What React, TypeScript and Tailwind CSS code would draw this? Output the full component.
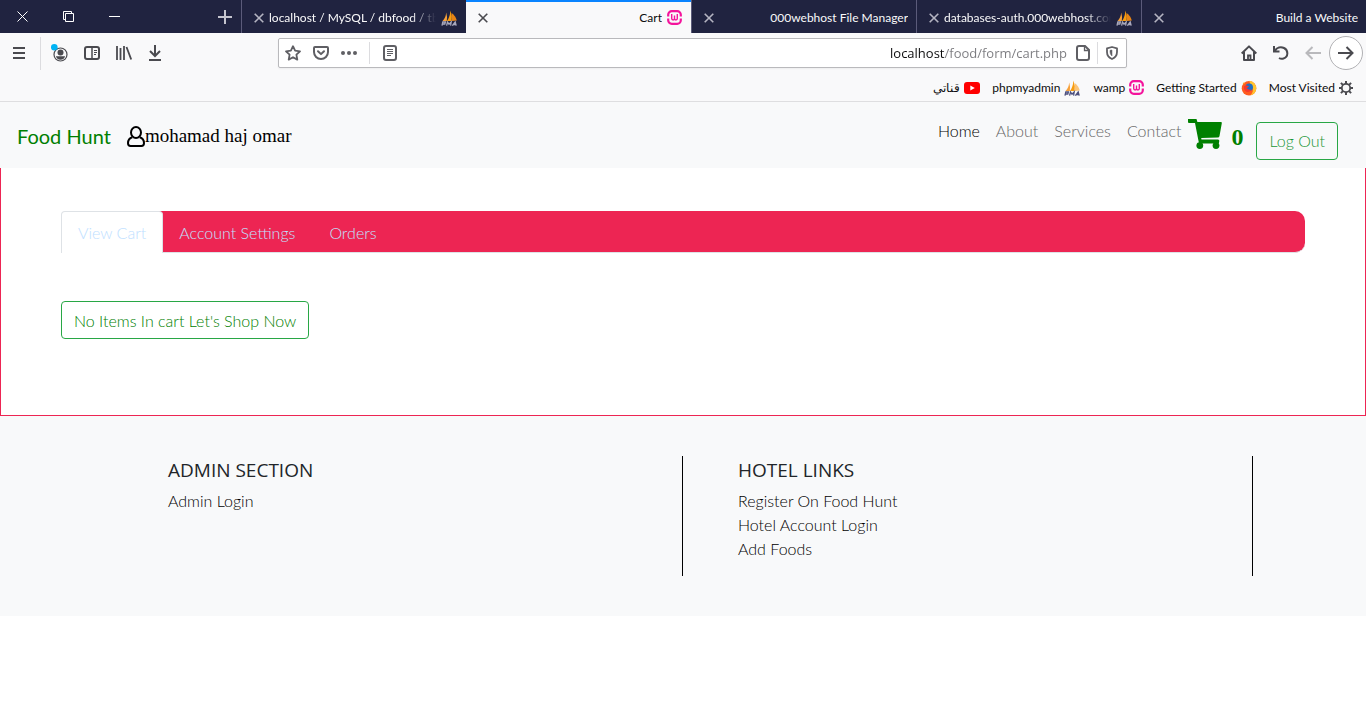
import React from "react";

function CloseGlyph() {
  return (
    <svg width="10" height="10" viewBox="0 0 10 10" stroke="currentColor" strokeWidth="1.6" fill="none">
      <path d="M0.7 0.7 9.3 9.3M9.3 0.7 0.7 9.3" />
    </svg>
  );
}

function UserIcon() {
  return (
    <svg width="18" height="21" viewBox="0 0 18 21" fill="none" stroke="currentColor" strokeWidth="2" className="shrink-0">
      <ellipse cx="9" cy="6.500" rx="5" ry="5.500" />
      <path d="M5.300 11.300Q1 12.500 1 17.300 1 20 3.600 20h10.800Q17 20 17 17.300 17 12.500 12.700 11.300" />
    </svg>
  );
}

function CartIcon() {
  return (
    <svg width="34" height="30" viewBox="0 0 34 30" fill="currentColor" className="shrink-0">
      <path d="M0 0h8.500L9.400 3H33q1 0 .8 1.200L31.500 17q-.2 1.500-1.800 1.600L13.200 19l.3 1.500H30q1.500 0 1.300 1.500l-.5 2.500H11L7 4H1Q0 4 0 3Z" />
      <circle cx="11.800" cy="26.600" r="3.400" />
      <circle cx="28" cy="26.600" r="3.400" />
    </svg>
  );
}

function SailIcon({ dark = false }: { dark?: boolean }) {
  return (
    <svg width="17" height="16" viewBox="0 0 17 16" className="shrink-0">
      <path d="M1.500 11Q4.800 8 5.200 2.500 6.600 7 5.800 11Z" fill="#f7a13a" />
      <path d="M6 11Q9 7 9.400 0.500 11.600 6 10.600 11Z" fill="#f89c0e" />
      <path d="M10.600 3Q14.500 5.500 15.800 10.500L11 11Z" fill={dark ? "#e88414" : "#fbc478"} />
      <path
        d="M1 15.700 1.800 12h2.600l-.6 2H1.400M5.600 15.700 6.500 12l1.500 2.200L10.200 12l-.6 3.700M11.400 15.700 14.200 12l1 3.700M12.400 14.500h2.600"
        stroke={dark ? "#a9a9bd" : "#4c4f7d"}
        strokeWidth="1.3"
        fill="none"
      />
    </svg>
  );
}

function WampIcon() {
  return (
    <svg width="15" height="15" viewBox="0 0 15 15" fill="none" stroke="#f4149c" className="shrink-0">
      <path d="M1.200 6.500V4.800A3.600 3.600 0 0 1 4.800 1.200h5.400a3.600 3.600 0 0 1 3.600 3.600v1.700M1.200 8.500v1.700a3.600 3.600 0 0 0 3.600 3.600h5.400a3.600 3.600 0 0 0 3.600-3.600V8.500" strokeWidth="2.2" />
      <path d="M4.700 4v4.600q0 1.400 1.400 1.400t1.400-1.400V5.500M7.500 8.600q0 1.400 1.400 1.400t1.400-1.400V4" strokeWidth="1.4" />
    </svg>
  );
}

function FirefoxIcon() {
  return (
    <svg width="16" height="16" viewBox="0 0 16 16" className="shrink-0">
      <circle cx="8" cy="8.3" r="7.3" fill="#ff5a1f" />
      <path d="M8.5 0.8C13 1.6 16 5.4 15.2 9.6 14.6 12.8 12 15 9.3 15.5 12 13 12.5 10 11.3 7.2 10.2 5 8.4 3.6 8.5 0.8Z" fill="#ffc42e" />
      <path d="M1.6 4.2 3 2l1.200 1.600Z" fill="#ff9a1f" />
      <circle cx="8.2" cy="7.300" r="3.800" fill="#1f6fc4" />
      <path d="M3 6.2Q5.5 4.6 8 6.4 6.8 7.6 5.6 8 7 10.4 10.8 9.6 8.4 13 5 11.4 2.4 9.6 3 6.2Z" fill="#f4382f" />
    </svg>
  );
}

function YoutubeIcon() {
  return (
    <svg width="16" height="12" viewBox="0 0 16 12" className="shrink-0">
      <rect width="16" height="12" rx="3" fill="#f00" />
      <path d="M6.3 3.4 10.8 6 6.3 8.6Z" fill="#fff" />
    </svg>
  );
}

function GearIcon() {
  return (
    <svg width="14" height="14" viewBox="0 0 14 14" fill="none" stroke="#4a4a4f" className="shrink-0">
      <circle cx="7" cy="7" r="4.2" strokeWidth="1.8" />
      <path d="M7 0v3M7 11v3M0 7h3M11 7h3M1.900 1.900l2 2M10.100 10.100l2 2M1.900 12.100l2-2M10.100 3.900l2-2" strokeWidth="2" />
    </svg>
  );
}

type TabProps = { title: string; active?: boolean; icon?: React.ReactNode; long?: boolean };

function BrowserTab({ title, active, icon, long }: TabProps) {
  return (
    <div
      className={
        active
          ? "flex h-[33px] min-w-0 flex-1 items-center border-t-2 border-[#0a84ff] bg-[#f9f9fa] pl-3 pr-[9px] text-[#0c0c0d]"
          : "flex h-[33px] min-w-0 flex-1 items-center border-l border-[#5b5b7a] pl-3 pr-2 pt-[2px] text-[#f9f9fa]"
      }
    >
      <button type="button" aria-label={"Close " + title} className={active ? "shrink-0 text-[#4a4a4f]" : "shrink-0 text-[#b5b5c2]"}>
        <CloseGlyph />
      </button>
      <button
        type="button"
        className={
          long
            ? "ml-[5px] min-w-0 flex-1 overflow-hidden whitespace-nowrap text-left mask-r-from-85% mask-r-to-100%"
            : "min-w-0 flex-1 truncate text-right"
        }
      >
        {title}
      </button>
      {icon && <span className="ml-[5px] flex shrink-0">{icon}</span>}
    </div>
  );
}

function WindowBar() {
  return (
    <div className="flex h-[33px] bg-[#202340] text-xs">
      <div className="flex w-[241px] shrink-0 items-center justify-between pl-[17px] pr-[9px] text-white">
        <div className="flex items-center gap-[35px]">
          <button type="button" aria-label="Close window">
            <svg width="11" height="11" viewBox="0 0 11 11" stroke="currentColor" fill="none"><path d="M.5.5l10 10M10.500.5l-10 10" /></svg>
          </button>
          <button type="button" aria-label="Restore window">
            <svg width="11" height="11" viewBox="0 0 11 11" stroke="currentColor" fill="none"><path d="M2.500 2.500h8v8h-8zM2.500 8.500h-2v-8h8v2" /></svg>
          </button>
          <button type="button" aria-label="Minimize window">
            <svg width="11" height="11" viewBox="0 0 11 11" stroke="currentColor" fill="none"><path d="M0 5.500h11" /></svg>
          </button>
        </div>
        <button type="button" aria-label="New tab" className="text-[#c4c4ce]">
          <svg width="14" height="14" viewBox="0 0 14 14" stroke="currentColor" strokeWidth="2"><path d="M7 0v14M0 7h14" /></svg>
        </button>
      </div>
      <BrowserTab title="localhost / MySQL / dbfood / tb" icon={<SailIcon dark />} long />
      <BrowserTab title="Cart" icon={<WampIcon />} active />
      <BrowserTab title="000webhost File Manager" />
      <BrowserTab title="databases-auth.000webhost.com" icon={<SailIcon dark />} long />
      <BrowserTab title="Build a Website" />
    </div>
  );
}

function Toolbar() {
  return (
    <div className="flex h-10 items-center text-[#4a4a4f]">
      <button type="button" aria-label="Menu" className="ml-[13px] mr-[15px]">
        <svg width="12" height="12" viewBox="0 0 12 12" stroke="currentColor" strokeWidth="2"><path d="M0 1h12M0 6h12M0 11h12" /></svg>
      </button>
      <span className="h-[33px] w-px bg-[#dcdcdf]" />
      <div className="ml-[10px] flex items-center gap-4">
        <button type="button" aria-label="Account">
          <svg width="17" height="18" viewBox="0 0 17 18" fill="none">
            <circle cx="9.500" cy="10.500" r="6.500" stroke="currentColor" strokeWidth="1.2" />
            <circle cx="9.500" cy="8.500" r="3" fill="currentColor" />
            <path d="M4.800 12.300h9.400Q12.800 15.800 9.500 15.800T4.800 12.300Z" fill="currentColor" />
            <circle cx="3.300" cy="3.300" r="3.300" fill="#00b3f4" />
          </svg>
        </button>
        <button type="button" aria-label="Sidebar">
          <svg width="16" height="14" viewBox="0 0 16 14" fill="none" stroke="currentColor">
            <rect x="1" y="1" width="14" height="12" rx="2" strokeWidth="2" />
            <path d="M8 1v12" strokeWidth="1.5" />
            <path d="M10 4.500h3M10 6.500h3M10 8.500h2" />
          </svg>
        </button>
        <button type="button" aria-label="Library">
          <svg width="16" height="14" viewBox="0 0 16 14" fill="none" stroke="currentColor" strokeWidth="1.8">
            <path d="M1 0v14M4.500 2v12M8 0v14M10.500 1 15.200 13.500" />
          </svg>
        </button>
        <button type="button" aria-label="Downloads">
          <svg width="14" height="16" viewBox="0 0 14 16" fill="none" stroke="currentColor" strokeWidth="2">
            <path d="M7 0v11M2 6l5 5 5-5M1 15h12" />
          </svg>
        </button>
      </div>
      <div className="ml-[116px] flex h-[30px] min-w-0 flex-1 items-center rounded-xs border border-[#b9b9bc] bg-white pl-[6px] pr-2 text-[#5f5f64] shadow-xs">
        <button type="button" aria-label="Bookmark this page">
          <svg width="16" height="16" viewBox="0 0 16 16" fill="none" stroke="currentColor" strokeWidth="1.800" strokeLinejoin="round">
            <path d="M8 1.200l2.100 4.500 4.900.6-3.600 3.400.9 4.900L8 12.200l-4.300 2.400.9-4.900L1 6.300l4.900-.6Z" />
          </svg>
        </button>
        <button type="button" aria-label="Save to Pocket" className="ml-3">
          <svg width="16" height="14" viewBox="0 0 16 14" fill="none" stroke="currentColor" strokeWidth="2" strokeLinecap="round" strokeLinejoin="round">
            <path d="M2 1h12q1 0 1 1v4a7 7 0 0 1-14 0V2Q1 1 2 1ZM5 5.200l3 2.900 3-2.900" />
          </svg>
        </button>
        <button type="button" aria-label="Page actions" className="ml-3">
          <svg width="16" height="4" viewBox="0 0 16 4" fill="currentColor"><circle cx="2" cy="2" r="2" /><circle cx="8" cy="2" r="2" /><circle cx="14" cy="2" r="2" /></svg>
        </button>
        <span className="ml-3 h-[22px] w-px bg-[#dcdcdf]" />
        <button type="button" aria-label="Reader view" className="ml-[13px]">
          <svg width="14" height="16" viewBox="0 0 14 16" fill="none" stroke="currentColor">
            <rect x="1" y="1" width="12" height="14" rx="2" strokeWidth="2" />
            <path d="M4 4.500h6M4 6.500h6M4 8.500h6M4 10.500h4" />
          </svg>
        </button>
        <input
          type="text"
          aria-label="Address"
          defaultValue="localhost/food/form/cart.php"
          className="ml-3 min-w-0 flex-1 bg-[linear-gradient(to_left,#7a7a7e_122px,#0c0c0d_122px)] bg-clip-text pt-[2px] text-right font-['Open_Sans',sans-serif] text-[13px] text-transparent outline-none"
        />
        <svg width="14" height="16" viewBox="0 0 14 16" fill="none" stroke="currentColor" className="ml-[9px] shrink-0">
          <path d="M3 1h6l4 4v8q0 2-2 2H3q-2 0-2-2V3Q1 1 3 1Z" strokeWidth="2" />
          <path d="M8.500 1v4.500H13" strokeWidth="1.300" />
        </svg>
        <span className="ml-[7px] h-[22px] w-px bg-[#dcdcdf]" />
        <button type="button" aria-label="Tracking protection" className="ml-2">
          <svg width="12" height="14" viewBox="0 0 12 14" fill="none" stroke="currentColor">
            <path d="M6 1 11 2.300V6q0 4.800-5 7Q1 10.800 1 6V2.300Z" strokeWidth="1.800" strokeLinejoin="round" />
            <path d="M6 4v6Q4 8.500 4 6V4.300Z" fill="currentColor" strokeWidth=".5" />
          </svg>
        </button>
      </div>
      <div className="ml-[114px] flex items-center pr-[3px]">
        <button type="button" aria-label="Home page">
          <svg width="16" height="16" viewBox="0 0 16 16" fill="none" stroke="currentColor" strokeWidth="2">
            <path d="M.7 8.500 8 1.400l7.300 7.100M3 7v8h10V7" strokeLinejoin="round" />
            <path d="M7 15v-4.500h2.500V15" strokeWidth="1.800" />
          </svg>
        </button>
        <button type="button" aria-label="Reload" className="ml-4">
          <svg width="16" height="14" viewBox="0 0 16 14" fill="none" stroke="currentColor" strokeWidth="2">
            <path d="M1 0v5.500h5.500M1.500 5C4 1.200 8 .6 11 2c4.600 2.200 4.500 9-.5 10.500Q8 13.200 6 12" />
          </svg>
        </button>
        <button type="button" aria-label="Forward" className="ml-4 text-[#b9b9bc]">
          <svg width="16" height="14" viewBox="0 0 16 14" fill="none" stroke="currentColor" strokeWidth="2"><path d="M16 7H1.500M7.500 1l-6 6 6 6" /></svg>
        </button>
        <button type="button" aria-label="Back" className="ml-2 flex size-[34px] items-center justify-center rounded-full border border-[#b1b1b4] bg-white">
          <svg width="16" height="14" viewBox="0 0 16 14" fill="none" stroke="currentColor" strokeWidth="2"><path d="M0 7h14.500M8.500 1l6 6-6 6" /></svg>
        </button>
      </div>
    </div>
  );
}

function Bookmark({ label, icon }: { label: string; icon: React.ReactNode }) {
  return (
    <a href="#" className="flex items-center gap-1">
      <span>{label}</span>
      {icon}
    </a>
  );
}

function BookmarksBar() {
  return (
    <div className="flex h-[29px] items-center justify-end gap-3 border-b border-[#dedee0] pr-[13px] pt-px text-xs text-[#0c0c0d]">
      <Bookmark label="قناتي" icon={<YoutubeIcon />} />
      <Bookmark label="phpmyadmin" icon={<SailIcon />} />
      <Bookmark label="wamp" icon={<WampIcon />} />
      <Bookmark label="Getting Started" icon={<FirefoxIcon />} />
      <Bookmark label="Most Visited" icon={<GearIcon />} />
    </div>
  );
}

function SiteNav() {
  return (
    <nav className="flex h-[66px] items-start justify-between bg-[#f8f9fa] pl-[17px] pr-7">
      <div className="flex items-start pt-[18px]">
        <a href="#" className="text-xl leading-8 text-[#008000]">Food Hunt</a>
        <a href="#" className="ml-4 flex items-center font-['Liberation_Serif',serif] text-[19px] leading-8 text-black">
          <UserIcon />
          mohamad haj omar
        </a>
      </div>
      <div className="flex items-start text-[#666]">
        <div className="flex gap-4 pt-[17px] font-light">
          <a href="#" className="text-black">Home</a>
          <a href="#">About</a>
          <a href="#">Services</a>
          <a href="#">Contact</a>
        </div>
        <a href="#" className="ml-[7px] flex items-start pt-[17px] font-['Liberation_Serif',serif] text-2xl font-bold text-[#008000]">
          <CartIcon />
          <span className="ml-[9px] pt-[2px]">0</span>
        </a>
        <button type="button" className="ml-[13px] mt-5 h-[38px] rounded-sm border border-[#28a745] px-3 font-light text-[#1a9637]">
          Log Out
        </button>
      </div>
    </nav>
  );
}

function CartSection() {
  return (
    <main className="h-[248px] border-x border-b border-[#ed2553] bg-white px-[60px] pt-[43px]">
      <div role="tablist" className="flex h-[42px] rounded-[10px] border-b border-[#dee2e6] bg-[#ed2553] font-light text-[#bee0ff]">
        <button type="button" role="tab" aria-selected="true" className="-mb-px rounded-t-sm border border-b-0 border-[#dee2e6] bg-white px-4 pb-px pt-[2px]">
          View Cart
        </button>
        <button type="button" role="tab" aria-selected="false" className="px-4 pt-[3px]">Account Settings</button>
        <button type="button" role="tab" aria-selected="false" className="px-[18px] pt-[3px]">Orders</button>
      </div>
      <button type="button" className="mt-12 h-[38px] rounded-sm border border-[#28a745] px-3 pt-[2px] font-light text-[#008000]">
        No Items In cart Let's Shop Now
      </button>
    </main>
  );
}

function FooterColumn({ title, links }: { title: string; links: string[] }) {
  return (
    <section className="flex-1 border-r border-black pl-[55px]">
      <h5 className="mb-[7px] pt-[2px] font-['Open_Sans',sans-serif] text-[19px] leading-6 text-[#212529]">{title}</h5>
      <ul>
        {links.map((link) => (
          <li key={link} className="leading-6">
            <a href="#" className="font-light text-black">{link}</a>
          </li>
        ))}
      </ul>
    </section>
  );
}

export default function App() {
  return (
    <div className="min-h-screen bg-white font-['Lato','Noto_Sans',sans-serif] text-base">
      <header className="bg-[#f9f9fa]">
        <WindowBar />
        <Toolbar />
        <BookmarksBar />
      </header>
      <SiteNav />
      <CartSection />
      <footer className="bg-[#f8f9fa] py-10">
        <div className="mx-auto flex h-[120px] max-w-[1140px]">
          <FooterColumn title="ADMIN SECTION" links={["Admin Login"]} />
          <FooterColumn title="HOTEL LINKS" links={["Register On Food Hunt", "Hotel Account Login", "Add Foods"]} />
        </div>
      </footer>
    </div>
  );
}
